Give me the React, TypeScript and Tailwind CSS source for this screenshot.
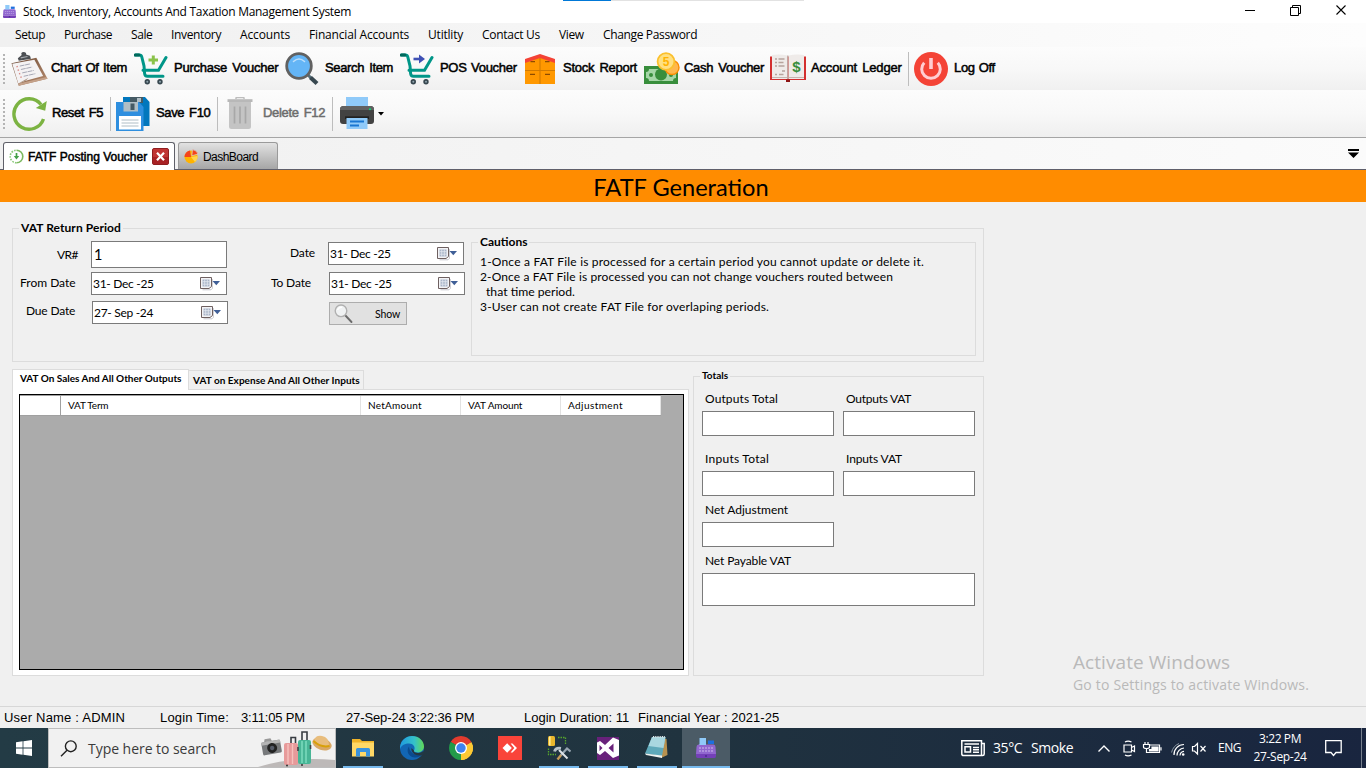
import type { ReactNode } from 'react';

const SEGOE = "font-['Open_Sans','Noto_Sans',sans-serif]";
const SANS = "font-['Liberation_Sans',Arial,sans-serif]";
const LATO = "font-['Lato',sans-serif]";

function CartIcon({ children }: { children: ReactNode }) {
  return (
    <svg width="34" height="32" viewBox="0 0 34 32" fill="none">
      <path d="M1.5 2H5.5Q7.3 2 7.8 4L10 13L10.6 20.5Q10.8 23.3 13.5 23.3H29" stroke="#009688" strokeWidth="3" strokeLinecap="round" />
      <path d="M9 17.3H24.5L32 4.5" stroke="#009688" strokeWidth="3" strokeLinecap="round" />
      <path d="M1.3 2H5" stroke="#00695c" strokeWidth="3" strokeLinecap="round" />
      {children}
      <circle cx="13.3" cy="28.7" r="2.7" fill="#37474f" /><circle cx="13.3" cy="28.7" r="1" fill="#90a4ae" />
      <circle cx="26" cy="28.7" r="2.7" fill="#37474f" /><circle cx="26" cy="28.7" r="1" fill="#90a4ae" />
    </svg>
  );
}

function ClipboardIcon() {
  return (
    <svg width="37" height="36" viewBox="0 0 38 36" className="shrink-0">
      <defs><linearGradient id="wood" x1="0" y1="0" x2="1" y2="1"><stop offset="0" stopColor="#6b4a37" /><stop offset="1" stopColor="#b98d6e" /></linearGradient></defs>
      <path d="M0.5 12L26 6.5L37.5 28L8 35.3Z" fill="url(#wood)" />
      <path d="M8 35.3L37.5 28L36.8 26.2L7.8 33Z" fill="#c5a28a" />
      <path d="M1.2 12.5L24 8.5L33 25.3L15 30L7.5 33Z" fill="#f4f2f3" />
      <path d="M7.5 33L15 30L18 27Z" fill="#a9927f" />
      <path d="M8 9.5L7 7L11 3.5Q9.5 0.8 13 0.5Q16 0.8 15.5 3L19.5 4.5L20.5 7.5Z" fill="#4d5054" />
      <path d="M10 6.5L17 5.2" stroke="#a6abb0" strokeWidth="1.2" />
      <path d="M9 15L20 12.7M10.2 18.5L21.7 16M11.5 22L23.3 19.5M13 25.5L25 22.8" stroke="#9a9dab" strokeWidth=".9" strokeDasharray="5 .6" />
      <path d="M5.6 15.8L7 15.4M6.8 19.5L8.2 19M8.2 23L9.5 22.6M9.6 26.5L11 26" stroke="#d98a84" strokeWidth="1.4" />
    </svg>
  );
}

function SearchBlueIcon() {
  return (
    <svg width="34" height="34" viewBox="0 0 34 34">
      <path d="M22.5 22.5L26 26" stroke="#546e7a" strokeWidth="3" />
      <path d="M25.5 25.5L32 31.5" stroke="#37474f" strokeWidth="4.2" />
      <circle cx="14" cy="14" r="12.3" fill="#64b5f6" stroke="#616161" strokeWidth="2.8" />
      <path d="M8.5 9.5Q14 4.5 19.5 9.5" stroke="#bbdefb" strokeWidth="1.6" fill="none" strokeLinecap="round" />
    </svg>
  );
}

function CupboardIcon() {
  return (
    <svg width="30" height="30" viewBox="0 0 30 30">
      <path d="M0 7L15 2L30 7V30H0Z" fill="#ff9800" />
      <path d="M0 5L15 0L30 5V9L15 4L0 9Z" fill="#f44336" />
      <path d="M15 4V30M0 16.5H30" stroke="#d17a00" strokeWidth="1.1" />
      <path d="M5.5 7.7H10M20 7.7H24.5M5 20.3H10M20 20.3H25" stroke="#8d4b00" strokeWidth="1.2" />
    </svg>
  );
}

function CashIcon() {
  return (
    <svg width="36" height="33" viewBox="0 0 36 33">
      <rect x="0" y="14" width="34" height="18" fill="#388e3c" />
      <path d="M5 17H29Q29 20 32 20V26Q29 26 29 29H5Q5 26 2 26V20Q5 20 5 17Z" fill="#a5d6a7" />
      <circle cx="17" cy="22.5" r="6" fill="#388e3c" /><circle cx="7" cy="23" r="2" fill="#388e3c" /><circle cx="27" cy="23" r="2" fill="#388e3c" />
      <circle cx="28" cy="15.5" r="7" fill="#ffb74d" stroke="#fb8c00" strokeWidth="1.4" />
      <circle cx="22" cy="9.5" r="8.4" fill="#ffe082" stroke="#fbc02d" strokeWidth="1.8" />
      <text x="22" y="14" textAnchor="middle" fontSize="12" fontWeight="700" fill="#ffb300" fontFamily="Liberation Sans">5</text>
    </svg>
  );
}

function BookIcon() {
  return (
    <svg width="38" height="29" viewBox="0 0 38 29">
      <path d="M1 2.5V26H17L19 28L21 26H37V2.5Z" fill="#d32f2f" />
      <path d="M17 25.5H21V28H17Z" fill="#8e1515" />
      <path d="M3 1Q11 0 18.5 1.5V25H3Z" fill="#efebe9" /><path d="M19.5 1.5Q27 0 35 1V25H19.5Z" fill="#efebe9" />
      <path d="M3 23.5H18.5M19.5 23.5H35" stroke="#c4b6b1" strokeWidth="1" />
      <path d="M18.8 1.5V25" stroke="#bcaaa4" strokeWidth="1.2" />
      <path d="M6 5H8M9.5 5H15.5M6 8.5H8M9.5 8.5H14.5M6 12H8M9.5 12H15.5M13 17H16M6 20.5H8M10 20.5H14.5" stroke="#b7a49d" strokeWidth="1.4" />
      <text x="27.3" y="18" textAnchor="middle" fontSize="15" fontWeight="700" fill="#388e3c" fontFamily="Liberation Sans">$</text>
    </svg>
  );
}

function PowerIcon() {
  return (
    <svg width="34" height="34" viewBox="0 0 34 34" fill="none">
      <circle cx="17" cy="17" r="17" fill="#f44336" />
      <path d="M10.2 10.7A9.3 9.3 0 1 0 23.8 10.7" stroke="#ffcdd2" strokeWidth="3" />
      <path d="M17 6V17" stroke="#ffcdd2" strokeWidth="3.6" />
    </svg>
  );
}

function ResetIcon() {
  return (
    <svg width="36" height="35" viewBox="0 0 36 35" fill="none">
      <path d="M31.5 23A15.2 15.2 0 1 1 29 8.5" stroke="#7cb342" strokeWidth="3.4" />
      <path d="M34.8 5L33.2 14.8L23.8 12Z" fill="#7cb342" />
    </svg>
  );
}

function SaveIcon() {
  return (
    <svg width="34" height="34" viewBox="0 0 34 34">
      <path d="M7 0H29L33.5 5V29H7Z" fill="#0277bd" />
      <path d="M14 0H27V6H14Z" fill="#455a64" /><path d="M21 1H25V5H21Z" fill="#b0bec5" />
      <path d="M0 5H23L27.5 10V34H0Z" fill="#2f8fdf" />
      <path d="M7.5 5H22V14.5H7.5Z" fill="#b0bec5" /><path d="M14.5 6.5H18.5V13H14.5Z" fill="#455a64" />
      <path d="M3 19H25V32.5H3Z" fill="#fff" />
      <path d="M5.5 23H22.5M5.5 26H22.5M5.5 29H22.5" stroke="#b0bec5" strokeWidth="1" />
    </svg>
  );
}

function TrashIcon() {
  return (
    <svg width="26" height="33" viewBox="0 0 26 33" fill="none">
      <path d="M9 2V1Q9 .5 10 .5H16Q17 .5 17 1V2" stroke="#bdbdbd" strokeWidth="1.5" />
      <path d="M.5 2.2H25.5V5H.5Z" fill="#b8b8b8" />
      <path d="M2 5H24V29.5Q24 32 21.5 32H4.5Q2 32 2 29.5Z" fill="#c4c4c4" />
      <path d="M7.5 9.5V26.5M13 9.5V26.5M18.5 9.5V26.5" stroke="#a8a8a8" strokeWidth="1.7" />
    </svg>
  );
}

function PrinterIcon() {
  return (
    <svg width="34" height="33" viewBox="0 0 34 33">
      <path d="M6 0H28V10H6Z" fill="#90caf9" />
      <path d="M3.5 9H30.5Q34 9 34 12.5V24Q34 27 31 27H3Q0 27 0 24V12.5Q0 9 3.5 9Z" fill="#424242" />
      <path d="M0 13H34V11.5Q33.5 9 30.5 9H3.5Q.5 9 0 11.5Z" fill="#616161" />
      <circle cx="30" cy="12.3" r="1" fill="#00e676" />
      <path d="M5 19.3H29V22H5Z" fill="#212121" />
      <path d="M6.5 21H27.5V32H6.5Z" fill="#90caf9" />
      <path d="M10 24.5H24M10 28.5H19" stroke="#1976d2" strokeWidth="1.8" />
    </svg>
  );
}

function CalendarDrop() {
  return (
    <svg width="22" height="14" viewBox="0 0 22 14" className="shrink-0">
      <path d="M2.5 12.8H11L12.3 11.5V2" stroke="#c5c5cc" strokeWidth="1" fill="none" />
      <path d="M.5 .5H11.5V9.5L9 11.5H.5Z" fill="#f3f3f6" stroke="#6e6060" strokeWidth="1" />
      <path d="M2.5 2.5H9.5V9.5H2.5Z" fill="#a9b4c8" />
      <path d="M4.7 2.5V9.5M7.3 2.5V9.5M2.5 4.7H9.5M2.5 7.2H9.5" stroke="#e4e8f0" strokeWidth=".8" />
      <path d="M12.5 4H20L16.3 8.3Z" fill="#3f5f97" />
    </svg>
  );
}

function Magnifier() {
  return (
    <svg width="20" height="20" viewBox="0 0 20 20" className="shrink-0">
      <path d="M10.5 10.5L17.5 18" stroke="#6b6b6b" strokeWidth="1.9" strokeLinecap="round" />
      <circle cx="7" cy="6.8" r="5.8" fill="#f0f2f3" stroke="#b0b0b0" strokeWidth="1.4" />
      <path d="M3.5 6Q5 3 8 3.2" stroke="#fff" strokeWidth="1.5" fill="none" />
    </svg>
  );
}

function RegisterIcon({ size }: { size: number }) {
  return (
    <svg width={size} height={size} viewBox="0 0 20 20" className="shrink-0">
      <path d="M3.5 0H10V8H3.5Z" fill="#90caf9" /><path d="M12 2.5H18V6H12Z" fill="#1e6fe0" />
      <path d="M2.5 6.5H17.5Q19.5 6.5 19.5 9L20 16H0L.5 9Q.5 6.5 2.5 6.5Z" fill="#9167cf" />
      <path d="M3.5 7H10V6H3.5Z" fill="#90caf9" />
      <path d="M0 16H20V18Q20 20 18.5 20H1.5Q0 20 0 18Z" fill="#7440b8" />
      <path d="M3 10H17M3 13H17" stroke="#b9a0e4" strokeWidth="1.3" strokeDasharray="2 1" />
      <path d="M9 18H11" stroke="#4a2a8c" strokeWidth="1.4" />
    </svg>
  );
}

const menu = [
  ['Setup', 'w-[49px] tracking-[-0.45px]'], ['Purchase', 'w-[67px] tracking-[-0.45px]'], ['Sale', 'w-[40px] tracking-[-0.4px]'],
  ['Inventory', 'w-[69px] tracking-[-0.35px]'], ['Accounts', 'w-[69px] tracking-[-0.12px]'], ['Financial Accounts', 'w-[119px] tracking-[-0.17px]'],
  ['Utitlity', 'w-[54px] tracking-[-0.2px]'], ['Contact Us', 'w-[77px] tracking-[-0.27px]'], ['View', 'w-[44px] tracking-[-0.4px]'], ['Change Password', 'tracking-[-0.35px]'],
];

function ToolLabel({ children, cls }: { children: string; cls: string }) {
  return <span className={`${SANS} text-[13px] leading-[16px] pb-[2px] whitespace-nowrap [-webkit-text-stroke:0.5px_currentColor] ${cls}`}>{children}</span>;
}

function Grip() {
  return (
    <div className="flex flex-col gap-[2px] w-[9px] pl-[3px] shrink-0">
      {[0, 1, 2, 3, 4, 5, 6, 7].map((i) => <i key={i} className="block size-[2px] bg-[#b4b4b4]" />)}
    </div>
  );
}

function Sep() {
  return <div className="w-px h-[34px] bg-[#bdbdbd] shrink-0" />;
}

function Legend({ children, cls }: { children: string; cls: string }) {
  return <div className={`${LATO} w-fit bg-[#f0f0f0] pr-[2px] pl-[2px] font-bold whitespace-nowrap ${cls}`}>{children}</div>;
}

function Label({ children, cls }: { children: string; cls: string }) {
  return <span className={`${LATO} text-[12px] leading-[16px] whitespace-nowrap ${cls}`}>{children}</span>;
}

function DateBox({ children }: { children: string }) {
  return (
    <div className="w-[136px] h-[23px] border border-[#7a7a7a] bg-white flex items-center justify-between pl-[1px] pr-[4px] shrink-0">
      <span className={`${LATO} text-[12px] tracking-[-0.3px] leading-[16px] whitespace-nowrap pt-[1px]`}>{children}</span>
      <CalendarDrop />
    </div>
  );
}

function TotalBox({ label, cls, box }: { label: string; cls: string; box: string }) {
  return (
    <div className="flex flex-col">
      <Label cls={`pl-[3px] h-[20px] ${cls}`}>{label}</Label>
      <div className={`border border-[#7a7a7a] bg-white ${box}`} />
    </div>
  );
}

function TaskItem({ children, open, active }: { children: ReactNode; open?: boolean; active?: boolean }) {
  return (
    <div className={`h-full flex flex-col items-center shrink-0 ${active ? 'w-[48px] ml-px bg-[#4b5b66]' : 'w-[49px]'}`}>
      <div className="h-[38px] pt-[1px] flex items-center">{children}</div>
      {open && <div className={`h-[2px] bg-[#76b9ed] ${active ? 'w-full' : 'w-[40px]'}`} />}
    </div>
  );
}

export default function App() {
  return (
    <div className={`w-[1366px] h-[768px] overflow-hidden flex flex-col bg-[#f0f0f0] text-black ${SEGOE}`}>
      <header className="h-[23px] shrink-0 bg-white flex items-center pl-[3px] relative">
        <RegisterIcon size={13} />
        <span className="text-[12px] tracking-[-0.285px] leading-[16px] pl-[7px] pt-[1px] whitespace-nowrap flex-1">Stock, Inventory, Accounts And Taxation Management System</span>
        <div className="absolute top-0 left-[563px] flex h-px w-[241px] bg-[#e2e2e2]"><div className="w-[48px] bg-[#0078d7]" /></div>
        <svg width="102" height="12" viewBox="0 0 102 12" fill="none" stroke="#000" className="mr-[19px] -mt-[3px]">
          <path d="M0 6.5H10M45.5 3.5H53.5V11.5H45.5ZM47.5 3.5V1.5H55.5V9.5H53.5" /><path d="M91.5 1.5L100.5 10.5M100.5 1.5L91.5 10.5" strokeWidth="1.1" />
        </svg>
      </header>
      <nav className="h-[24px] shrink-0 flex items-center pl-[15px] bg-linear-to-r from-[#f0f0f0] to-[#fdfdfd] text-[12px] leading-[16px] whitespace-nowrap">
        {menu.map(([t, c]) => <span key={t} className={`shrink-0 ${c}`}>{t}</span>)}
      </nav>
      <div className="h-[43px] shrink-0 flex items-center bg-linear-to-b from-[#fcfcfc] via-[#f8f8f8] to-[#f0f0f0]">
        <Grip />
        <div className="w-[125px] pl-[2px] flex items-center gap-[3px]"><ClipboardIcon /><ToolLabel cls="tracking-[-0.32px] [word-spacing:1.1px]">Chart Of Item</ToolLabel></div>
        <div className="w-[151px] flex items-center gap-[6px]"><CartIcon><path d="M19.3 2.5V11.5M14.5 7H24" stroke="#8bc34a" strokeWidth="3" /></CartIcon><ToolLabel cls="tracking-[-0.25px] [word-spacing:2px]">Purchase Voucher</ToolLabel></div>
        <div className="w-[115px] flex items-center gap-[6px]"><SearchBlueIcon /><ToolLabel cls="tracking-[-0.35px] [word-spacing:1.8px]">Search Item</ToolLabel></div>
        <div className="w-[125px] flex items-center gap-[6px]"><CartIcon><path d="M13.5 6H20" stroke="#3f51b5" strokeWidth="2.6" /><path d="M19 1.5L25 6L19 10.5Z" fill="#3f51b5" /></CartIcon><ToolLabel cls="tracking-[-0.3px] [word-spacing:1.2px]">POS Voucher</ToolLabel></div>
        <div className="w-[119px] flex items-center gap-[8px]"><CupboardIcon /><ToolLabel cls="tracking-[-0.25px] [word-spacing:1.8px]">Stock Report</ToolLabel></div>
        <div className="w-[125px] flex items-center gap-[4px]"><CashIcon /><ToolLabel cls="tracking-[-0.28px] [word-spacing:1.8px]">Cash Voucher</ToolLabel></div>
        <div className="w-[139px] flex items-center gap-[4px]"><BookIcon /><ToolLabel cls="tracking-[-0.15px] [word-spacing:1.8px]">Account Ledger</ToolLabel></div>
        <Sep />
        <div className="flex items-center gap-[6px] pl-[5px]"><PowerIcon /><ToolLabel cls="tracking-[-0.3px] [word-spacing:.6px]">Log Off</ToolLabel></div>
      </div>
      <div className="h-[48px] shrink-0 flex items-center border-b border-[#a5a5a5] bg-linear-to-b from-[#fcfcfc] via-[#f8f8f8] to-[#efefef]">
        <Grip />
        <div className="w-[101px] pl-[3px] flex items-center gap-[4px]"><ResetIcon /><ToolLabel cls="tracking-[-0.4px] [word-spacing:1.6px]">Reset F5</ToolLabel></div>
        <Sep />
        <div className="w-[106px] pl-[5px] flex items-center gap-[6px]"><SaveIcon /><ToolLabel cls="tracking-[-0.35px] [word-spacing:1.6px]">Save F10</ToolLabel></div>
        <Sep />
        <div className="w-[114px] pl-[9px] flex items-center gap-[10px] text-[#6d6d6d]"><TrashIcon /><ToolLabel cls="tracking-[-0.3px] [word-spacing:1.6px]">Delete F12</ToolLabel></div>
        <Sep />
        <div className="pl-[7px] flex items-center gap-[4px]"><PrinterIcon /><svg width="6" height="4" viewBox="0 0 6 4"><path d="M0 0H6L3 3.5Z" /></svg></div>
      </div>
      <div className="h-[32px] shrink-0 flex items-end border-b border-[#5f5f6b] bg-linear-to-r from-[#f0f0f0] to-[#fbfbfb] pl-[3px]">
        <div className="w-[172px] h-[28px] -mb-px rounded-t-[3px] border border-b-0 border-[#5f6069] bg-white flex items-center pl-[5px] pb-[1px]">
          <svg width="15" height="15" viewBox="0 0 15 15" fill="none" className="shrink-0"><path d="M7.5 1.2A6.3 6.3 0 0 1 7.5 13.8" stroke="#7cb860" strokeWidth="1.6" /><path d="M7.5 13.8A6.3 6.3 0 0 1 7.5 1.2" stroke="#8bc97a" strokeWidth="1.6" strokeDasharray="1.6 1.2" /><path d="M7.5 4V8" stroke="#43a047" strokeWidth="1.7" /><path d="M4.8 7H10.2L7.5 10.5Z" fill="#43a047" /></svg>
          <span className={`${SANS} text-[12px] leading-[16px] whitespace-nowrap pl-[4px] pt-[2px] w-[128px] shrink-0 [-webkit-text-stroke:0.5px_#000]`}>FATF Posting Voucher</span>
          <svg width="17" height="17" viewBox="0 0 17 17" className="shrink-0"><rect x=".5" y=".5" width="16" height="16" rx="1.5" fill="#c03433" stroke="#8f1e20" /><path d="M1 9H16V16H1Z" fill="#a82124" /><path d="M5 4.8L12 12.2M12 4.8L5 12.2" stroke="#fff" strokeWidth="2.2" /></svg>
        </div>
        <div className="ml-[3px] w-[100px] h-[27px] rounded-t-[3px] border border-b-0 border-[#9a9a9a] bg-linear-to-b from-[#e2e2e2] to-[#a6a6a6] flex items-center pl-[5px]">
          <svg width="15" height="15" viewBox="0 0 15 15"><circle cx="7" cy="8" r="6.5" fill="#ffb300" /><path d="M7 8L.5 8A6.5 6.5 0 0 1 6 1.5Z" fill="#f4431c" /><path d="M7 8L13.5 7A6.5 6.5 0 0 1 11 13Z" fill="#ffd54f" /><path d="M7.8 6.8L8.5 .6A6.5 6.5 0 0 1 14 5Z" fill="#f4431c" stroke="#d5d5d5" strokeWidth=".7" /></svg>
          <span className={`${SANS} text-[12px] tracking-[-0.55px] leading-[16px] pl-[4px] pt-[2px]`}>DashBoard</span>
        </div>
        <div className="flex-1" />
        <svg width="11" height="9" viewBox="0 0 11 9" className="mr-[7px] mb-[11px]"><path d="M0 0H11V2H0ZM0 3.5H11L5.5 9Z" /></svg>
      </div>
      <div className="h-[32px] shrink-0 bg-[#ff8c00] flex justify-center items-center pt-[2px]"><h1 className={`${LATO} text-[23.6px] leading-[30px] pr-[4px]`}>FATF Generation</h1></div>

      <main className="flex-1 min-h-0 flex flex-col pl-[12px] pt-[26px] relative">
        <section className="w-[972px] h-[134px] shrink-0 border border-[#dcdcdc] flex">
          <div className="w-[458px] shrink-0 flex flex-col">
            <Legend cls="-mt-[9px] ml-[6px] h-[16px] text-[12px] leading-[16px] tracking-[0.07px]">VAT Return Period</Legend>
            <div className="flex mt-[5px]">
              <div className="w-[216px] flex flex-col gap-[5px]">
                <div className="flex h-[26px] items-center"><Label cls="w-[78px] pl-[44px] tracking-[-0.6px] pt-[2px]">VR#</Label><div className={`${LATO} w-[136px] h-[27px] border border-[#7a7a7a] bg-white pl-[2px] text-[14.5px] leading-[25px]`}>1</div></div>
                <div className="flex h-[23px] items-center"><Label cls="w-[78px] pl-[7px] pb-[2px]">From Date</Label><DateBox>31- Dec -25</DateBox></div>
                <div className="flex h-[23px] items-center mt-[1px]"><Label cls="w-[79px] pl-[13px] tracking-[-0.18px] pb-[3px]">Due Date</Label><DateBox>27- Sep -24</DateBox></div>
              </div>
              <div className="flex flex-col pl-[42px] pt-[1px]">
                <div className="flex h-[23px] items-center mb-[7px]"><Label cls="w-[57px] pl-[19px] tracking-[-0.1px] pb-[2px]">Date</Label><DateBox>31- Dec -25</DateBox></div>
                <div className="flex h-[23px] items-center mb-[7px]"><Label cls="w-[58px] tracking-[-0.13px] pb-[2px]">To Date</Label><DateBox>31- Dec -25</DateBox></div>
                <div className="ml-[58px] w-[78px] h-[23px] border border-[#adadad] bg-[#e1e1e1] flex items-center justify-between pl-[4px] pr-[6px]"><Magnifier /><span className={`${LATO} text-[10.5px] tracking-[-0.15px] leading-[16px]`}>Show</span></div>
              </div>
            </div>
          </div>
          <div className="w-[505px] h-[114px] mt-[13px] border border-[#dcdcdc]">
            <Legend cls="-mt-[9px] ml-[6px] h-[16px] text-[12px] leading-[16px]">Cautions</Legend>
            <div className={`${LATO} text-[12px] leading-[15px] pl-[8px] pt-[4px] whitespace-nowrap flex flex-col`}>
              <span className="tracking-[0.19px]">1-Once a FAT File is processed for a certain period you cannot update or delete it.</span>
              <span className="tracking-[0.126px]">2-Once a FAT File is processed you can not change vouchers routed between</span>
              <span className="pl-[6px] text-[12.2px]">that time period.</span>
              <span className="tracking-[0.18px]">3-User can not create FAT File for overlaping periods.</span>
            </div>
          </div>
        </section>

        <div className="flex mt-[7px]">
          <section className="w-[677px] flex flex-col shrink-0">
            <div className={`${LATO} flex items-end text-[10px] leading-[14px] font-bold whitespace-nowrap`}>
              <div className="w-[177px] h-[21px] -mb-px bg-white border border-b-0 border-[#dcdcdc] pl-[7px] pt-[1px] tracking-[-0.01px] relative">VAT On Sales And All Other Outputs</div>
              <div className="w-[175px] h-[19px] border border-l-0 border-b-0 border-[#dcdcdc] pl-[4px] pt-[2px] tracking-[0.04px]">VAT on Expense And All Other Inputs</div>
            </div>
            <div className="h-[287px] border border-[#dcdcdc] bg-white pt-[4px] pl-[6px]">
              <div className="w-[665px] h-[276px] border border-black bg-[#ababab]">
                <div className={`${LATO} w-[641px] h-[21px] border-y border-t-[#a0a0a0] border-b-[#a0a0a0] bg-white flex text-[10px] leading-[18px] whitespace-nowrap`}>
                  <div className="w-[41px] border-r border-[#a0a0a0]" />
                  <div className="w-[300px] border-r border-[#e2e2e2] pl-[7px] tracking-[-0.2px]">VAT Term</div>
                  <div className="w-[100px] border-r border-[#e2e2e2] pl-[7px] tracking-[0.26px]">NetAmount</div>
                  <div className="w-[100px] border-r border-[#e2e2e2] pl-[7px] tracking-[-0.12px]">VAT Amount</div>
                  <div className="w-[100px] border-r border-[#e2e2e2] pl-[7px] tracking-[0.42px]">Adjustment</div>
                </div>
              </div>
            </div>
          </section>
          <section className="ml-[4px] mt-[7px] w-[291px] h-[300px] border border-[#dcdcdc] pl-[8px]">
            <Legend cls="-mt-[9px] -ml-[2px] h-[14px] text-[10px] leading-[14px]">Totals</Legend>
            <div className="flex gap-[9px] mt-[9px]">
              <TotalBox label="Outputs Total" cls="tracking-[0.11px]" box="w-[132px] h-[25px]" />
              <TotalBox label="Outputs VAT" cls="tracking-[-0.25px]" box="w-[132px] h-[25px]" />
            </div>
            <div className="flex gap-[9px] mt-[15px]">
              <TotalBox label="Inputs Total" cls="tracking-[0.25px]" box="w-[132px] h-[25px]" />
              <TotalBox label="Inputs VAT" cls="tracking-[-0.13px]" box="w-[132px] h-[25px]" />
            </div>
            <div className="mt-[6px]"><TotalBox label="Net Adjustment" cls="" box="w-[132px] h-[25px]" /></div>
            <div className="mt-[6px]"><TotalBox label="Net Payable VAT" cls="tracking-[-0.12px]" box="w-[273px] h-[33px]" /></div>
          </section>
        </div>
        <div className="absolute left-[1073px] top-[447px] text-[#b9b9b9] whitespace-nowrap">
          <div className="text-[19px] tracking-[0.07px] leading-[26px]">Activate Windows</div>
          <div className="text-[14px] tracking-[0.19px] leading-[20px]">Go to Settings to activate Windows.</div>
        </div>
      </main>

      <div className={`${SANS} h-[22px] shrink-0 border-t border-[#d7d7d7] flex items-center text-[13px] leading-[16px] pl-[4px] whitespace-nowrap`}>
        <span className="w-[156px] tracking-[0.2px]">User Name : ADMIN</span>
        <span className="w-[81px] tracking-[0.16px]">Login Time:</span>
        <span className="w-[105px] tracking-[-0.15px]">3:11:05 PM</span>
        <span className="w-[178px] tracking-[-0.12px]">27-Sep-24 3:22:36 PM</span>
        <span className="w-[114px]">Login Duration: 11</span>
        <span className="tracking-[0.04px]">Financial Year : 2021-25</span>
      </div>

      <footer className="h-[40px] shrink-0 flex items-center bg-linear-to-r from-[#233b45] via-[#20333f] to-[#19253f] text-white">
        <div className="w-[48px] pl-[16px] shrink-0"><svg width="16" height="16" viewBox="0 0 16 16" fill="#fff"><path d="M0 2.2L6.6 1.3V7.6H0ZM7.4 1.2L16 0V7.6H7.4ZM0 8.4H6.6V14.7L0 13.8ZM7.4 8.4H16V16L7.4 14.8Z" /></svg></div>
        <div className="w-[288px] h-full bg-[#f1f1f1] border border-[#bdbdbd] flex items-center pl-[11px] shrink-0 text-[#3b3b3b]">
          <svg width="18" height="17" viewBox="0 0 18 17" fill="none" stroke="#222" strokeWidth="1.4"><circle cx="10.8" cy="6.3" r="5.4" /><path d="M7 10.3L1 16.2" /></svg>
          <span className="text-[14px] leading-[20px] tracking-[-0.04px] pl-[10px] pt-[1px] whitespace-nowrap">Type here to search</span>
          <div className="flex-1" />
          <svg width="77" height="38" viewBox="0 0 77 38" className="shrink-0">
            <path d="M0 38Q35 27 77 31V38Z" fill="#bdb9b8" />
            <g transform="translate(1 1) rotate(-10 13 17)"><rect x="3" y="11" width="19" height="13" rx="1.5" fill="#77797b" /><path d="M7 8H13L14 11H6Z" fill="#999" /><rect x="3" y="11" width="19" height="3" fill="#b4b4b4" /><circle cx="13" cy="18" r="5" fill="#222" /><circle cx="13" cy="18" r="2.2" fill="#555b68" /></g>
            <path d="M33 14V8.500H37.500V14M44 11V3H49V11" stroke="#383c42" strokeWidth="1.6" fill="none" />
            <rect x="40" y="11" width="13" height="24" rx="2" fill="#48b596" /><path d="M44 12V34M48 12V34" stroke="#80dfc1" strokeWidth="1.4" />
            <rect x="26" y="14" width="14" height="22" rx="2" fill="#e79a9a" /><path d="M30 15V35M34.500 15V35" stroke="#f6c1bd" strokeWidth="1.4" />
            <path d="M40 18V22M52.500 16V20" stroke="#3f4348" strokeWidth="1.6" /><circle cx="29" cy="36.500" r="1" fill="#333" /><circle cx="44" cy="36" r="1" fill="#333" />
            <ellipse cx="64" cy="15" rx="10" ry="6" transform="rotate(18 64 15)" fill="#d9a865" /><path d="M56 12Q57 6 64 7Q71 8 71 17Q63 18 56 12Z" fill="#e8bd7d" /><path d="M55.500 12Q63 19 71.500 17" stroke="#d8a008" strokeWidth="2" fill="none" />
          </svg>
        </div>
        <div className="flex h-full pl-[2px] shrink-0">
          <TaskItem open><svg width="22" height="18" viewBox="0 0 22 18"><path d="M0 0H8L10 2H22V17H0Z" fill="#f0b429" /><path d="M0 3.5H22V17.5H0Z" fill="#ffd866" /><path d="M4 17.5V10.5Q4 9 5.5 9H16.5Q18 9 18 10.5V17.5H14V13H8V17.5Z" fill="#3a93dd" /></svg></TaskItem>
          <TaskItem><svg width="24" height="24" viewBox="0 0 24 24"><defs><linearGradient id="edge" x1="0" y1="0" x2="1" y2="0"><stop offset="0" stopColor="#1f9ae0" /><stop offset=".6" stopColor="#35c1c9" /><stop offset="1" stopColor="#62d954" /></linearGradient></defs><circle cx="12" cy="12" r="12" fill="#1266b4" /><path d="M0 11C1 4 6 0 12 0C19 0 24 5 24 10.5C24 14 21 16.5 18 16.5C15 16.5 13.5 15.5 14 14.5C16 11 13 7.5 9 7.5C5 7.5 1.5 9 0 13Z" fill="url(#edge)" /><path d="M9 10.5C6 14 8 21 14.5 21.5C17.5 21.7 20 20.5 22.5 18C17 20 9.5 18 9 10.5Z" fill="#0b4b8e" /><path d="M14 14.5C13.5 15.5 15 17 18 17C20.5 17 22.5 16 23.5 14.5L24 18L21 19.5C15 20 10.5 16 11.5 12Z" fill="#233742" /></svg></TaskItem>
          <TaskItem><svg width="24" height="24" viewBox="0 0 24 24"><path d="M12 12L1.61 6A12 12 0 0 1 22.39 6Z" fill="#e33b2e" /><path d="M12 12L22.39 6A12 12 0 0 1 12 24Z" fill="#fcc934" /><path d="M12 12V24A12 12 0 0 1 1.61 6Z" fill="#229a4a" /><path d="M12 6H22.39L12 12Z" fill="#e33b2e" /><path d="M17.2 15L12 24L12 14Z" fill="#fcc934" /><path d="M1.61 6L6.8 15L12 12Z" fill="#229a4a" /><path d="M17.2 9H23.6A12 12 0 0 1 12 24L17.2 15Z" fill="#fcc934" /><circle cx="12" cy="12" r="6" fill="#fff" /><circle cx="12" cy="12" r="4.7" fill="#3f83f0" /></svg></TaskItem>
          <TaskItem><svg width="24" height="24" viewBox="0 0 24 24"><rect width="24" height="24" fill="#f9443a" /><path d="M4.5 12L9.2 7.3L13.8 12L9.2 16.7Z" fill="#fff" /><path d="M12.6 7.6L14.5 7.6L19 12L14.5 16.4H12.6L16.3 12Z" fill="#fff" /></svg></TaskItem>
          <TaskItem open><svg width="24" height="24" viewBox="0 0 24 24"><rect x="1" y="0" width="7" height="10" rx="1.5" fill="#e9b62d" /><path d="M2.8 .5V9.5" stroke="#fff0a0" strokeWidth="1.5" /><path d="M11 1.5H18.5V9M1.5 12.5V18.5H9" stroke="#57a62c" strokeWidth="1.3" strokeDasharray="1.5 1" fill="none" /><path d="M10.5 23.5L14.5 18.5" stroke="#c69a57" strokeWidth="2.4" /><path d="M14 19L20 12.5L23.5 15.5" stroke="#97a5b0" strokeWidth="2.2" fill="none" /><path d="M12 14L20.5 22.5" stroke="#dfe4e8" strokeWidth="2" /><path d="M7.5 15.5Q8.5 11.5 14 12.3" stroke="#b8c2ca" strokeWidth="2.8" fill="none" /></svg></TaskItem>
          <TaskItem open><svg width="22" height="24" viewBox="0 0 22 24"><rect width="22" height="23" y="1" fill="#68217a" /><path d="M16 1.5L22 4V19.5L16 22L8 15L3 19L0 17V6.5L3 5L8 9ZM16.5 7.5L11.5 12L16.5 16.5ZM2.5 9V15L5.5 12Z" fill="#fff" fillRule="evenodd" /></svg></TaskItem>
          <TaskItem open><svg width="23" height="23" viewBox="0 0 23 23"><path d="M17 2L21.5 3L22.5 19L16 22Z" fill="#b89250" /><path d="M7 1H20.5L17 20L0 17.5Z" fill="#5fa9ba" /><path d="M7 1H20.5L18.5 12L3.5 10Z" fill="#a9d7e0" /><path d="M0 17.5L17 19.5L17 22L1 19Z" fill="#eef2f0" /><path d="M8 .8H20" stroke="#dfe6e8" strokeWidth="1.5" strokeDasharray="1 .8" /></svg></TaskItem>
          <TaskItem open active><RegisterIcon size={20} /></TaskItem>
        </div>
        <div className="flex-1" />
        <div className="flex items-center h-full shrink-0 whitespace-nowrap">
          <svg width="24" height="17" viewBox="0 0 24 17" fill="none" stroke="#fff" strokeWidth="1.5" className="shrink-0"><path d="M.8 .8H20.5V15.5H2.5Q.8 15.5 .8 14ZM20.5 3.5H23.2V14Q23.2 15.5 21.5 15.5H19M4 6.8H9.5V12H4ZM3.5 4H18M12 7.5H18M12 9.8H18M12 12.2H18" /></svg>
          <span className="text-[14px] leading-[20px] tracking-[-0.4px] w-[46px] pl-[8px] shrink-0">35°C</span>
          <span className="text-[14px] leading-[20px] tracking-[-0.4px] w-[67px] shrink-0">Smoke</span>
          <svg width="120" height="17" viewBox="0 0 120 17" fill="none" stroke="#fff" strokeWidth="1.2" className="shrink-0">
            <path d="M.5 11.5L6 6L11.5 11.5" strokeWidth="1.4" />
            <path d="M26 5H33.5V12H26ZM33.5 7.5L36.5 6V11.5L33.5 10M27 2Q30 .2 33.5 2M27 15Q30 16.8 33.5 15" />
            <path d="M52 5H61.5V12.5H50.5M63 7.2V10.5M47 2V4.5M50 2V4.5M45.5 4.5H51.5V7Q51.5 8.5 48.5 8.5Q45.5 8.5 45.5 7ZM48.5 8.5V12.5H51" /><path d="M54 7H60V11H51.5V9.5H54Z" fill="#fff" />
            <path d="M76 15A10 10 0 0 1 86 4.5M79 15.5A7.5 7.5 0 0 1 86 8M82 15.5A4.5 4.5 0 0 1 86 11.3" /><path d="M73.5 12.5A13 13 0 0 1 81 3.5" stroke="#8a97a3" strokeWidth="1" /><circle cx="85.2" cy="14.5" r="1.3" fill="#fff" stroke="none" />
            <path d="M94.5 6.5H96.5L99.5 3.5V14L96.5 11H94.5ZM102.5 6L107.5 11.5M107.5 6L102.5 11.5" />
          </svg>
          <span className="text-[12px] leading-[16px] tracking-[-0.45px] w-[35px] shrink-0">ENG</span>
          <div className="w-[54px] text-[12px] leading-[18px] text-center shrink-0"><div className="tracking-[-0.4px]">3:22 PM</div><div className="tracking-[-0.3px]">27-Sep-24</div></div>
          <svg width="17" height="17" viewBox="0 0 17 17" fill="none" stroke="#fff" strokeWidth="1.3" className="ml-[18px] shrink-0"><path d="M.7 .7H16.2V12.5H11L8.5 15.5L6 12.5H.7Z" /></svg>
          <div className="w-px h-[40px] bg-[#77808d] ml-[19px] mr-[4px] shrink-0" />
        </div>
      </footer>
    </div>
  );
}
